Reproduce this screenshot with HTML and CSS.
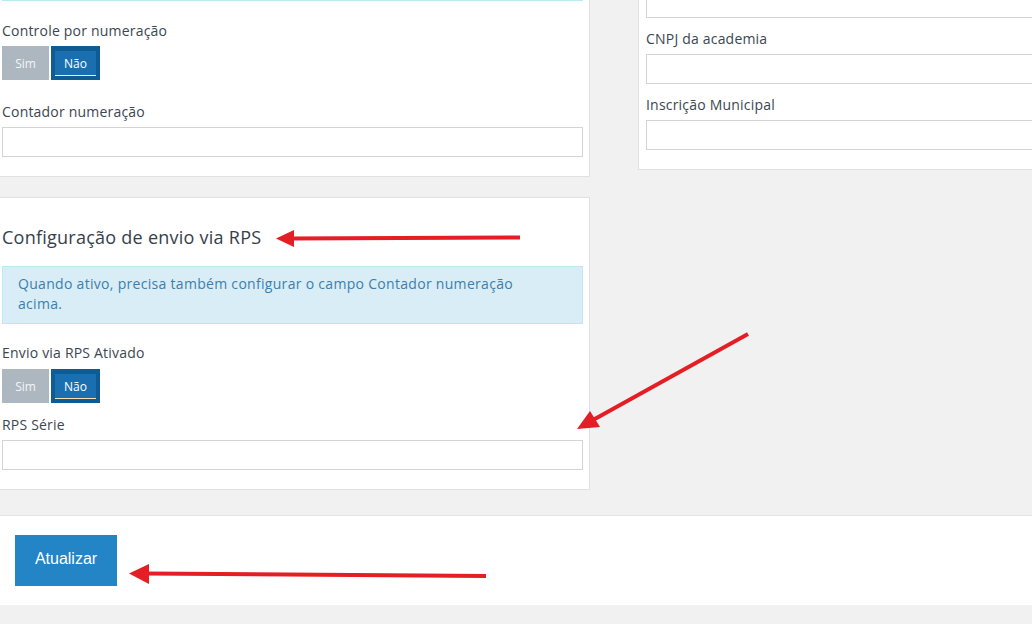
FILE: index.html
```html
<!DOCTYPE html>
<html lang="pt-BR">
<head>
<meta charset="utf-8">
<title>Configuração</title>
<link rel="stylesheet" href="styles.css">
</head>
<body>
<div class="page">
  <div class="top-row">
    <div class="panel panel-left">
      <div class="alert-tail"></div>
      <div class="group g1">
        <label class="lbl">Controle por numeração</label>
        <div class="toggle">
          <span class="opt off">Sim</span>
          <span class="opt on"><span class="inner">Não</span></span>
        </div>
      </div>
      <div class="group g2">
        <label class="lbl">Contador numeração</label>
        <div class="input"></div>
      </div>
    </div>
    <div class="panel panel-right">
      <div class="input first"></div>
      <div class="group r">
        <label class="lbl">CNPJ da academia</label>
        <div class="input"></div>
      </div>
      <div class="group r">
        <label class="lbl">Inscrição Municipal</label>
        <div class="input"></div>
      </div>
    </div>
  </div>

  <div class="panel panel-rps">
    <h3 class="title">Configuração de envio via RPS</h3>
    <div class="alert">Quando ativo, precisa também configurar o campo Contador numeração<br>acima.</div>
    <div class="group g3">
      <label class="lbl">Envio via RPS Ativado</label>
      <div class="toggle">
        <span class="opt off">Sim</span>
        <span class="opt on"><span class="inner alt">Não</span></span>
      </div>
    </div>
    <div class="group g4">
      <label class="lbl">RPS Série</label>
      <div class="input"></div>
    </div>
  </div>

  <div class="footer">
    <button class="btn">Atualizar</button>
  </div>
</div>

<svg class="arrows" width="1032" height="624" viewBox="0 0 1032 624">
  <g fill="#e31e24" stroke="#e31e24">
    <line x1="520" y1="237.5" x2="290" y2="238.5" stroke-width="4"/>
    <polygon points="276,238.5 294,230 294,247" stroke="none"/>
    <line x1="748" y1="334" x2="593" y2="420" stroke-width="4"/>
    <polygon points="577,429 590,411 600,427" stroke="none"/>
    <line x1="486" y1="576" x2="145" y2="573.5" stroke-width="4"/>
    <polygon points="129,573.5 149,564 149,584" stroke="none"/>
  </g>
</svg>
</body>
</html>
```

FILE: styles.css
```css
* { box-sizing: border-box; }
html, body { margin: 0; padding: 0; }
body {
  background: #f1f1f1;
  font-family: "Open Sans", "Noto Sans", sans-serif;
  font-size: 14px;
  letter-spacing: 0.2px;
  color: #3b4651;
  width: 1032px;
  height: 624px;
  overflow: hidden;
  position: relative;
}
.page { display: flex; flex-direction: column; }
.top-row { display: flex; align-items: flex-start; margin-top: -14px; }
.panel { background: #fff; border: 1px solid #e4e0e0; }
.panel-left {
  width: 590px;
  border-left: none;
  border-top: none;
  padding: 0 6px 19px 2px;
}
.alert-tail {
  height: 15px;
  background: #d9edf7;
  border-bottom: 1px solid #bce8f1;
  border-left: 1px solid #bce8f1;
  border-right: 1px solid #bce8f1;
}
.panel-right {
  margin-left: 48px;
  flex: 1;
  border-top: none;
  border-right: none;
  padding: 0 0 19px 7px;
}
.lbl { display: block; line-height: 20px; margin-bottom: 5px; }
.group.g1 { margin-top: 20px; }
.group.g2 { margin-top: 22px; }
.group.r { margin-top: 11px; }
.input {
  height: 30px;
  border: 1px solid #d4d4d4;
  background: #fff;
}
.input.first { height: 32px; border-right: none; }
.panel-right .input { border-right: none; }
.toggle { display: flex; gap: 2px; height: 34px; }
.opt {
  display: flex;
  align-items: center;
  justify-content: center;
  color: #fff;
  font-size: 12px;
  letter-spacing: 0;
}
.opt.off { width: 47px; background: #adb7bf; color: #f3f5f7; }
.opt.on { width: 49px; background: #0f5c93; padding: 5px 4px 4px; }
.opt.on .inner {
  flex: 1;
  height: 100%;
  background: #1a6fb1;
  display: flex;
  align-items: center;
  justify-content: center;
  border-bottom: 1px solid #e8eef4;
}
.opt.on .inner.alt { border-bottom-color: #f3e2b0; }

.panel-rps {
  width: 590px;
  margin-top: 20px;
  border-left: none;
  padding: 0 6px 19px 2px;
}
.title {
  margin: 26px 0 16px;
  font-size: 18px;
  letter-spacing: 0.25px;
  font-weight: 400;
  line-height: 26px;
  color: #35404a;
}
.alert {
  background: #d9edf7;
  border: 1px solid #bce8f1;
  color: #3a7fad;
  padding: 7px 15px 9px;
  line-height: 20px;
  letter-spacing: 0.3px;
}
.group.g3 { margin-top: 19px; }
.group.g3 .lbl { margin-bottom: 6px; }
.group.g4 { margin-top: 12px; }

.footer {
  margin-top: 25px;
  height: 90px;
  background: #fff;
  border-top: 1px solid #e4e4e4;
  padding: 19px 15px 0;
}
.btn {
  width: 102px;
  height: 51px;
  background: #2384c6;
  border: none;
  color: #fff;
  font-family: "Liberation Sans", Arial, sans-serif;
  font-size: 16px;
  letter-spacing: 0;
  padding: 0 0 4px;
}
.arrows { position: absolute; left: 0; top: 0; pointer-events: none; }
```
